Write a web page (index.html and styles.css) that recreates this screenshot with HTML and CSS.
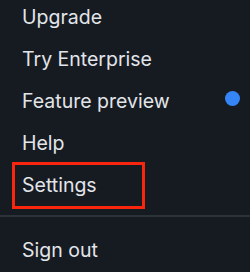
FILE: index.html
```html
<!DOCTYPE html>
<html lang="en">
<head>
<meta charset="utf-8">
<link rel="stylesheet" href="styles.css">
</head>
<body>
<nav class="menu">
  <ul class="menu-list">
    <li class="menu-item">Upgrade</li>
    <li class="menu-item">Try Enterprise</li>
    <li class="menu-item menu-item--badge">Feature preview<span class="dot"></span></li>
    <li class="menu-item">Help</li>
    <li class="menu-item menu-item--highlight">Settings</li>
  </ul>
  <hr class="divider">
  <ul class="menu-list">
    <li class="menu-item">Sign out</li>
  </ul>
</nav>
</body>
</html>
```
FILE: styles.css
```css
html, body {
  margin: 0;
  padding: 0;
  background: #161b22;
  width: 250px;
  height: 272px;
  overflow: hidden;
}
.menu {
  font-family: Inter, "Liberation Sans", Arial, sans-serif;
  font-size: 19.5px;
  color: #e2e5e9;
  margin-top: -4px;
}
.menu-list {
  list-style: none;
  margin: 0;
  padding: 0;
}
.menu-item {
  height: 42px;
  line-height: 42px;
  padding-left: 22px;
  padding-right: 10px;
  display: flex;
  align-items: center;
  justify-content: space-between;
}
.menu-item--highlight {
  position: relative;
}
.menu-item--highlight::after {
  content: "";
  position: absolute;
  left: 12px;
  top: -2px;
  width: 127px;
  height: 41px;
  border: 3.5px solid #f8250f;
}
.dot {
  width: 15px;
  height: 15px;
  border-radius: 50%;
  background: #3585f7;
  margin-bottom: 5px;
}
.divider {
  border: 0;
  height: 2px;
  background: #2c323a;
  margin: 9px 0 12px;
}
```
